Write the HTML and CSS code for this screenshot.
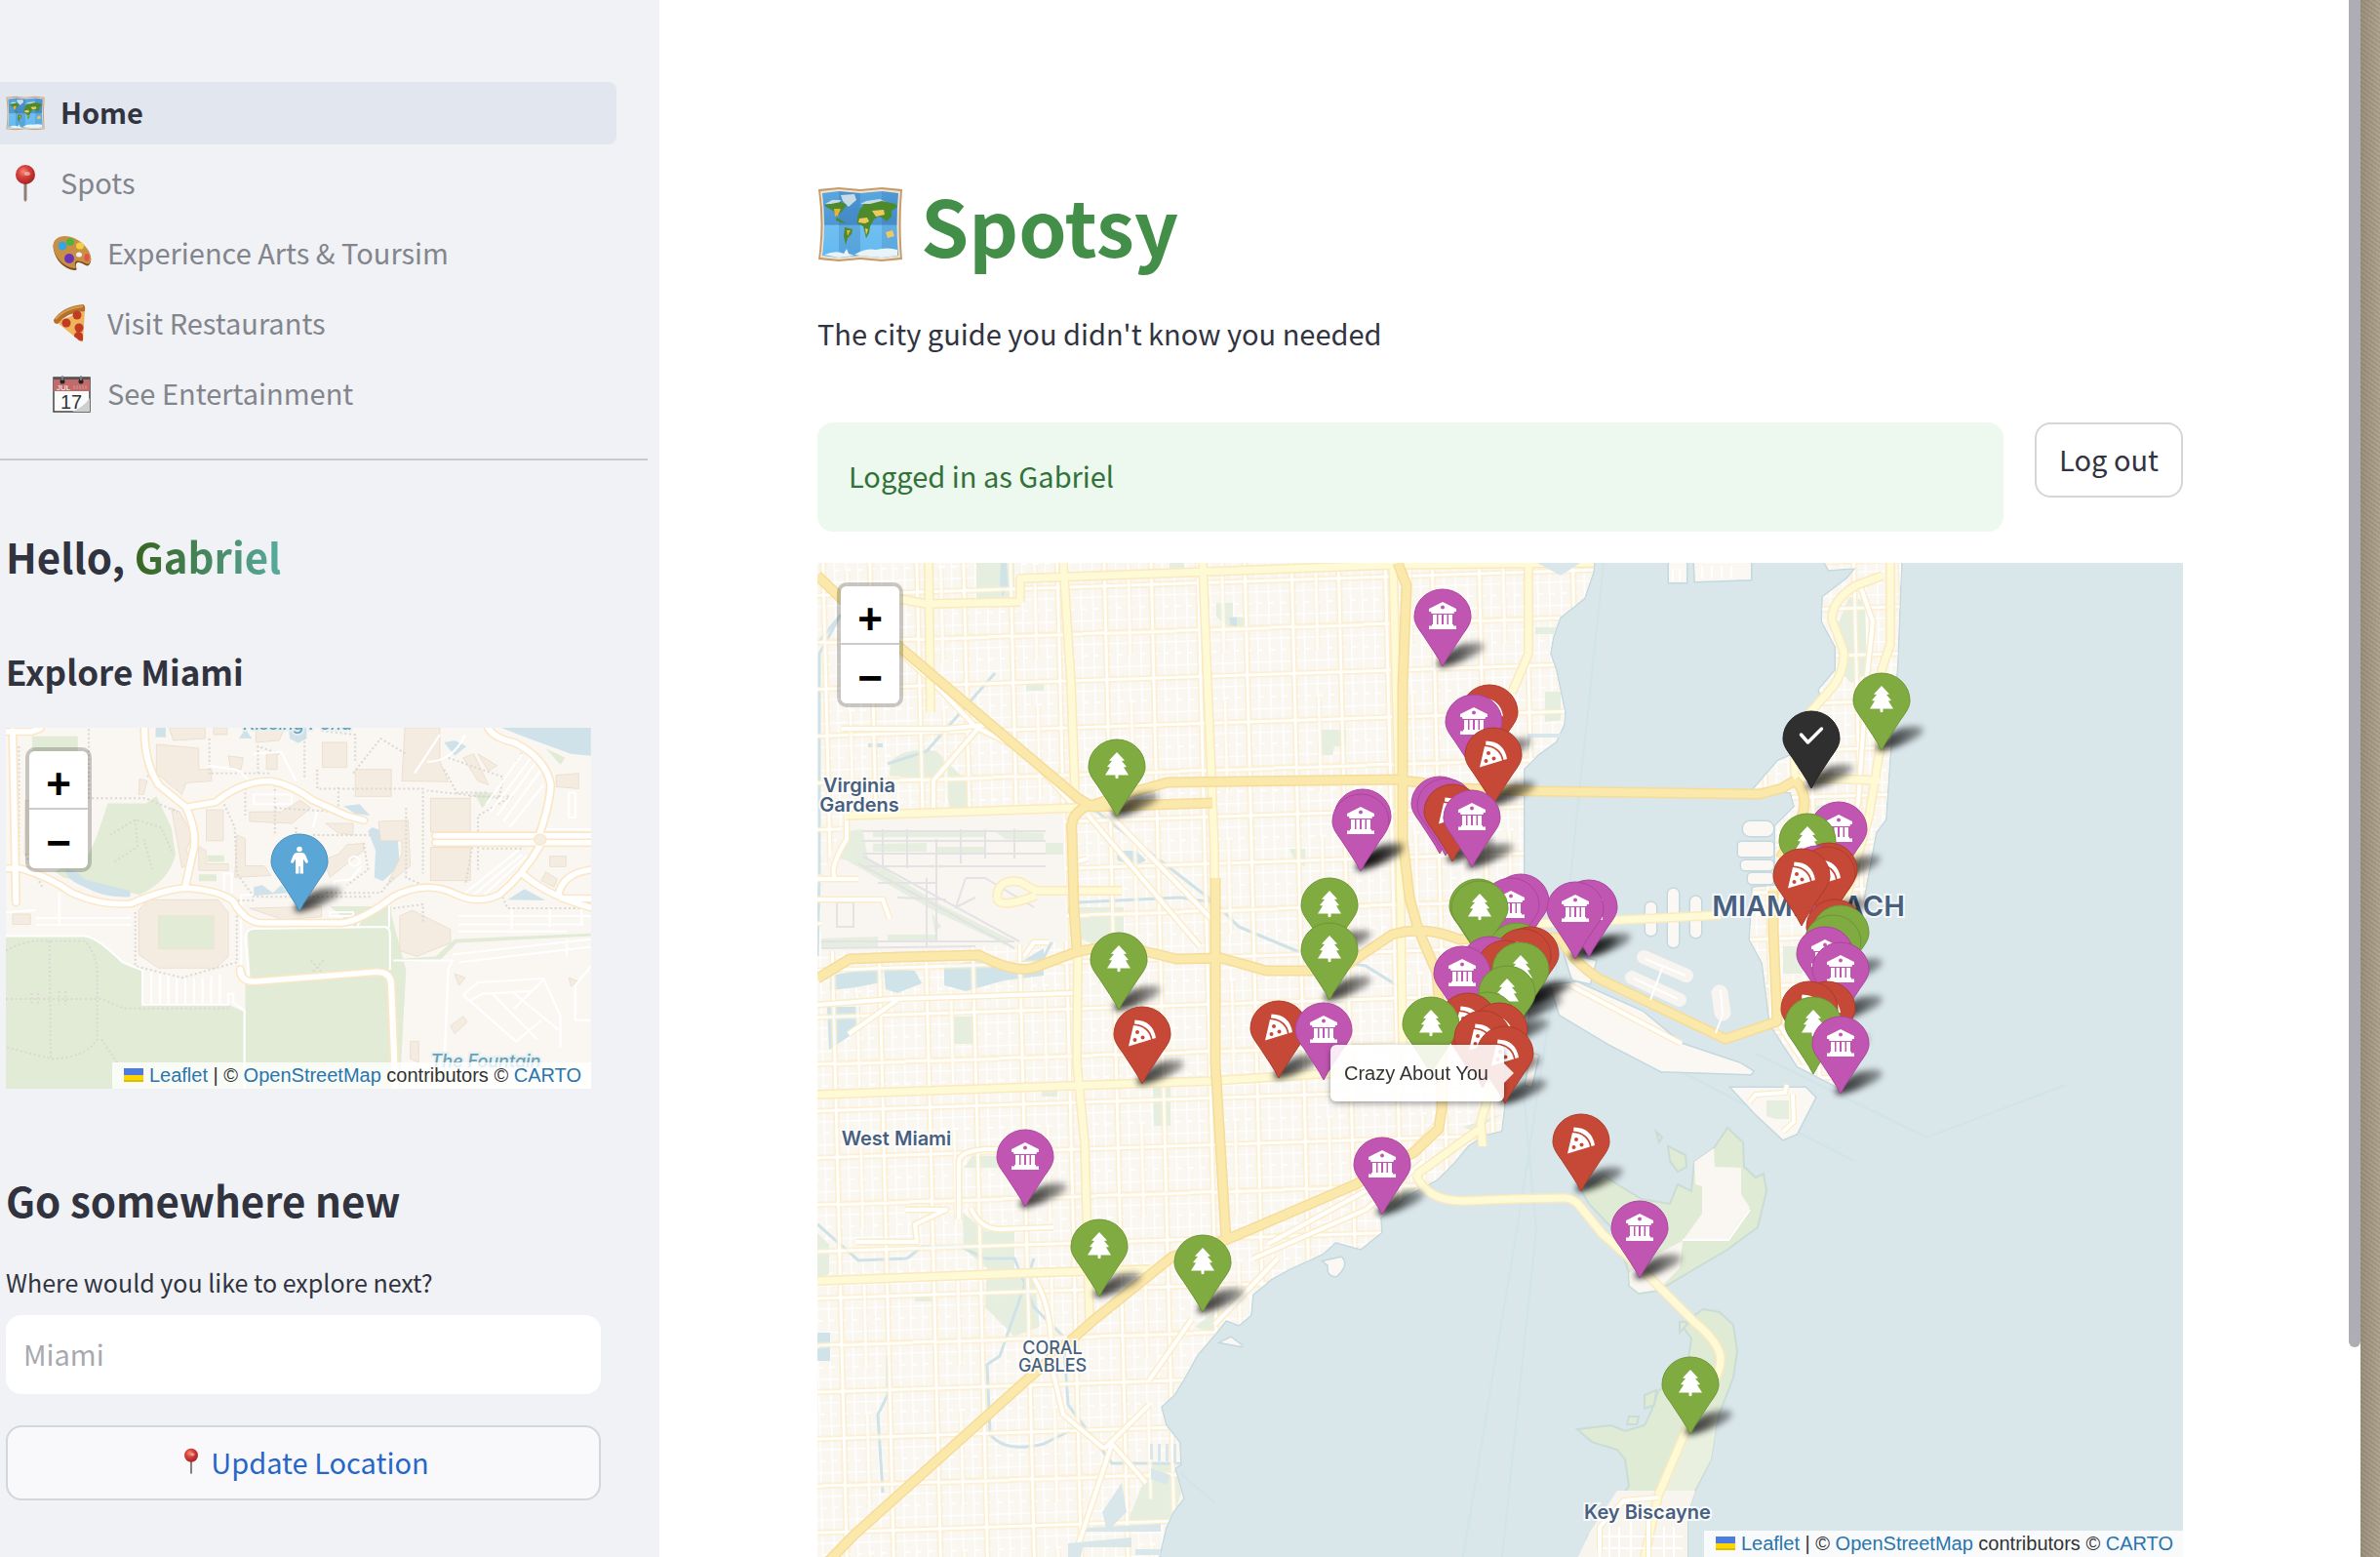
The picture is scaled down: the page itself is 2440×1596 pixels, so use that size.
FILE: index.html
```html
<!DOCTYPE html>
<html lang="en">
<head>
<meta charset="utf-8">
<title>Spotsy</title>
<link rel="stylesheet" href="styles.css">
</head>
<body>
<svg class="defs" aria-hidden="true">
  <defs>
    <linearGradient id="sea" x1="0" y1="0" x2="0" y2="1"><stop offset="0" stop-color="#5aa6df"/><stop offset=".5" stop-color="#4d97d2"/><stop offset=".52" stop-color="#72bff0"/><stop offset="1" stop-color="#63b8f0"/></linearGradient>
    <radialGradient id="ball" cx=".4" cy=".35" r=".7"><stop offset="0" stop-color="#f58a78"/><stop offset=".4" stop-color="#d8433c"/><stop offset="1" stop-color="#9e1f24"/></radialGradient>
    <linearGradient id="fade" x1="0" y1="0" x2="1" y2="0"><stop offset="0" stop-opacity=".8"/><stop offset=".45" stop-opacity=".65"/><stop offset="1" stop-opacity=".3"/></linearGradient>
    <symbol id="e-map" viewBox="0 0 88 76">
      <path d="M1 2 22 0 44 2 66 0 87 2Q84 38 87 74L66 76 44 74 22 76 1 74Q6 38 1 2Z" fill="#c79a6b"/>
      <path d="M3 4 22 2 44 4 66 2 85 4Q82 38 85 72L66 74 44 72 22 74 3 72Q8 38 3 4Z" fill="#efe3cf"/>
      <path d="M5 6 22 4 44 6 66 4 83 6Q80 38 83 70L66 72 44 70 22 72 5 70Q9 38 5 6Z" fill="url(#sea)"/>
      <path d="M22 4 44 6V70L22 72Z" fill="#1f5d9a" opacity=".22"/><path d="M66 4 83 6Q80 38 83 70L66 72Z" fill="#1f5d9a" opacity=".18"/>
      <path d="M7 69Q20 64 27 68L30 63 32 68 38 70 22 72ZM38 69Q50 62 60 64Q72 61 82 64L82 70 66 72 44 70Z" fill="#e9f3f8"/>
      <path d="M24 8 38 7 40 13 32 20 26 14ZM8 17 15 13 24 13 22 17ZM44 17 50 14 64 12 70 15 60 17Z" fill="#c9dbe4"/>
      <path d="M7 18 14 17 24 15 30 18 25 25 20 30 19 34 24 36 29 37 25 34 20 31 16 24 9 20ZM28 41 36 43 35 48 31 52 29 59 27 50Z" fill="#4c8a2c"/>
      <path d="M17 22 24 22 21 29 18 30ZM30 44 34 44 31 50Z" fill="#e3b33c"/>
      <path d="M44 22 48 17 54 17 66 14 80 17 82 20 76 24 76 30 71 35 66 31 62 30 58 33 54 40 53 47 50 52 47 40 41 37 41 30Z" fill="#4c8a2c"/>
      <path d="M43 32 51 31 53 35 49 37 42 36ZM56 24 68 23 69 28 60 30ZM49 42 52 43 50 49ZM70 46 77 44 79 50 72 52Z" fill="#f0c860"/>
    </symbol>
    <symbol id="e-pin" viewBox="0 0 40 40">
      <path d="M18.500 20h3v17l-1.500 2-1.500-2z" fill="#8d7f78"/><circle cx="20" cy="11" r="10" fill="url(#ball)"/><ellipse cx="22" cy="10" rx="3" ry="2" fill="#fff" opacity=".45"/>
    </symbol>
    <symbol id="e-palette" viewBox="0 0 40 40">
      <path d="M1 16C-1 7 5 3 12 3C24 3 37 13 39 24C40 29 37 34 34 32C30 30 25 27 24 31C23 34 27 37 22 37C12 36 3 27 1 16Z" fill="#7a4d1c"/>
      <path d="M1 15C-1 7 5 2 12 2C24 2 37 12 39 23C40 28 37 32 34 30C30 28 24 26 23 29C22 33 26 35 22 35C12 34 3 25 1 15Z" fill="#c98f45"/>
      <ellipse cx="27" cy="21" rx="3" ry="2.500" fill="#f0f2f6"/><circle cx="10" cy="12" r="4.500" fill="#3aa5dd"/><circle cx="18" cy="8" r="4" fill="#4db53c"/><ellipse cx="28" cy="12" rx="4" ry="3.500" fill="#f2cf45"/><circle cx="17" cy="25" r="5" fill="#6b34b8"/><ellipse cx="35" cy="24" rx="2.500" ry="4" fill="#e0524a"/>
    </symbol>
    <symbol id="e-pizza" viewBox="0 0 40 40">
      <path d="M4 18 33 6 31 38Q28 39 26 36Z" fill="#efb35a"/><path d="M1 16Q10 2 31 0Q34 1 33 7Q15 8 5 20Q1 20 1 16Z" fill="#b4702b"/><path d="M3 15Q12 4 31 2" fill="none" stroke="#d99a4c" stroke-width="2"/>
      <g fill="#c33a22"><circle cx="25" cy="11" r="4.500"/><circle cx="14" cy="19" r="4.500"/><circle cx="27" cy="24" r="4.500"/><path d="M22 33a4 4 0 0 1 9-1v5q-4 1-6-2z"/></g>
    </symbol>
    <symbol id="e-cal" viewBox="0 0 40 40">
      <path d="M1 3h37v35H1z" fill="#fbfbfb" stroke="#444" stroke-width="1.500"/><path d="M1 3h37v14H1z" fill="#c26a6a"/><path d="M1 3h37v2H1z" fill="#555"/>
      <circle cx="10" cy="7" r="2.500" fill="#222"/><circle cx="29" cy="7" r="2.500" fill="#222"/><path d="M10 1v5M29 1v5" stroke="#888" stroke-width="1.500"/>
      <path d="M38 24Q32 33 20 38H38Z" fill="#cfcfcf"/><path d="M22 11v4M25 11v4M28 11v4M31 11v4M34 11v4" stroke="#d79a9a"/>
      <text x="4" y="16" class="cal-m">JUL</text><text x="8" y="35" class="cal-d">17</text>
    </symbol>

    <path id="drop" d="M0 0C-5-10-13-21-20-32C-26-40-29-45-29-51A29 28 0 0 1 29-51C29-45 26-40 20-32C13-21 5-10 0 0Z"/>
    <path id="sh" fill="url(#fade)" d="M-6-2Q4-18 22-23Q42-27 43-21Q43-15 28-9Q12-1-2 1Z"/>
    <g id="i-museum" fill="#fff"><path fill-rule="evenodd" d="M0-66 14-59V-56H12Q12-54 11-54H-11Q-12-54-12-56H-14V-59ZM0-62.500a2 2 0 1 0 0 4a2 2 0 0 0 0-4Z"/><path d="M-10-53h4v11h-4zM-4.500-53h3.500v11h-3.500zM1-53h3.500v11H1zM6-53h4v11H6zM-11-43h22v2h-22zM-14-41.500h28v3.500h-28z"/></g>
    <g id="i-tree" fill="#fff"><path d="M0-66 8-57.500 5-57 10-51 7-50.500 12-42.500H1.500V-39.500Q0-38-1.500-39.500V-42.500H-12L-7-50.500-10-51-5-57-8-57.500Z"/></g>
    <g id="i-pizza"><path d="M-7.500-65.500Q11-65 14-47L10.500-46Q8-60-8-61.500Z" fill="#fff"/><path d="M-9-60Q6-59 9-45.500L-14-38.500Z" fill="#fff"/><g fill="#c54936"><circle cx="-5" cy="-53" r="2"/><circle cx="-7.500" cy="-45" r="2"/><circle cx=".5" cy="-47.500" r="2"/></g></g>
    <g id="pm"><use href="#drop" fill="#c156b2" stroke="#a9459c"/><use href="#i-museum"/></g>
    <g id="pg"><use href="#drop" fill="#80ab41" stroke="#6c9535"/><use href="#i-tree"/></g>
    <g id="pr"><use href="#drop" fill="#c54936" stroke="#ac3c2b"/><use href="#i-pizza"/></g>
    <g id="pk"><use href="#drop" fill="#2f2f30" stroke="#222"/><path d="M-10.500-55-3.500-47 10.500-61" fill="none" stroke="#fff" stroke-width="3.500" stroke-linecap="round" stroke-linejoin="round"/></g>
    <g id="pb"><use href="#drop" fill="#5aa6d6" stroke="#468fbe"/><g fill="#fff"><circle cy="-63.500" r="2.800"/><path d="M-3-60H3Q5-60 6.500-57L9-50.500Q8-48.500 6.500-49.500L4-53.500V-38.500H.5V-46H-.5V-38.500H-4V-53.500L-6.500-49.500Q-8-48.500-9-50.500L-6.500-57Q-5-60-3-60Z"/></g></g>
    <filter id="soft" x="-5%" y="-5%" width="110%" height="110%"><feGaussianBlur stdDeviation="3"/></filter>
    <filter id="soft-one" x="-30%" y="-60%" width="160%" height="220%"><feGaussianBlur stdDeviation="3"/></filter>

    <pattern id="minor" width="12" height="24" patternUnits="userSpaceOnUse" patternTransform="matrix(1 -.033 .024 1 0 0)"><rect width="12" height="24" fill="#faf6f0"/><path d="M0 .5H12M0 12.500H6M.5 0V24" stroke="#fff" stroke-width="2" fill="none"/></pattern>
    <pattern id="major" width="48" height="48" patternUnits="userSpaceOnUse" patternTransform="matrix(1 -.033 .024 1 820 587)"><path d="M0 24H48M24 0V48" stroke="#fcedc8" stroke-width="6"/><path d="M0 24H48M24 0V48" stroke="#fff" stroke-width="3"/></pattern>
    <pattern id="half" width="96" height="144" patternUnits="userSpaceOnUse" patternTransform="matrix(1 -.033 .024 1 844 563)"><path d="M24 24V120M0 96H72" stroke="#fcedc8" stroke-width="5" fill="none"/><path d="M24 24V120M0 96H72" stroke="#fff" stroke-width="3" fill="none"/></pattern>

    <path id="land" d="M838 577H1634L1633 587 1624 613 1599 633 1592 653 1589 670 1595 687 1604 730 1603 743 1595 760 1577 773 1562 788V1005L1567 1040 1562 1070 1545 1100 1541 1142 1539 1159 1522 1163 1505 1174 1491 1191 1473 1209 1441 1226 1415 1248 1416 1263 1395 1280 1369 1273 1356 1285 1321 1301 1303 1311 1284 1327 1282 1348 1270 1358 1257 1353 1245 1368 1227 1389 1216 1409 1204 1429 1190 1442 1195 1461 1209 1479 1210 1501 1204 1505 1213 1536 1202 1550 1195 1566 1188 1596V1640H838Z"/>
    <path id="beach" d="M1871 577H1949L1945 680 1937 780 1933 840 1923 853 1913 907 1900 980 1897 1033 1888 1080 1890 1117 1843 1093 1815 1050 1807 987 1794 963 1797 910 1820 908V847L1840 827 1836 812 1797 810 1823 780 1840 773 1850 740 1870 722 1865 707 1882 687V663L1868 637 1869 612 1894 593 1903 582 1875 584Z"/>
    <g id="isles"><path d="M1590 1010 1617 1007 1684 1037 1724 1070 1784 1090 1797 1098 1795 1101 1703 1098 1649 1070 1599 1040Z"/><path d="M1775 1115H1851L1861 1125 1842 1162 1828 1168 1800 1142Z"/><path d="M1711 577h18v20h-18zM1737 577h58v17l-57 2z"/><rect x="1787" y="842" width="31" height="15" rx="7"/><rect x="1782" y="863" width="36" height="15" rx="3"/><rect x="1785" y="882" width="33" height="10" rx="4"/><rect x="1792" y="895" width="26" height="11" rx="4"/><rect x="1687" y="925" width="11" height="34" rx="5"/><rect x="1710" y="911" width="11" height="60" rx="5"/><rect x="1733" y="919" width="11" height="42" rx="5"/><path d="M1604 978 1636 985 1630 1008 1612 1004ZM1570 1080 1577 1082 1570 1114 1564 1112ZM1252 1376 1262 1371 1274 1380ZM1357 1293 1375 1289Q1383 1296 1370 1308Q1360 1308 1362 1297Z"/></g>
    <path id="virginia" d="M1771 1156 1787 1171 1788 1196 1800 1207 1808 1203 1811 1221 1802 1258 1771 1281 1737 1301 1700 1323 1680 1326 1670 1318V1305L1661 1278 1652 1258 1629 1234 1622 1222 1644 1205 1658 1214 1683 1229 1712 1234 1720 1214 1734 1221 1737 1191 1757 1177Z"/>
    <path id="key" d="M1746 1342 1763 1345 1777 1358 1781 1385 1777 1412 1760 1456 1754 1496 1737 1530 1730 1553V1640H1614L1627 1576 1638 1560 1658 1540 1670 1523 1666 1496 1658 1486 1632 1478 1617 1465 1652 1461 1666 1467 1686 1461 1692 1449 1700 1426 1714 1415 1730 1400 1734 1372 1724 1358Z"/>
    <clipPath id="ground"><use href="#land"/><use href="#beach"/></clipPath>

    <g id="hw" fill="none" stroke-linejoin="round"><path d="M838 590 862 613 922 663 1009 737 1105 818 1120 827 1243 823M1115 827 1150 815 1197 802 1431 799 1500 808 1577 811 1804 814 1827 808 1840 800M1433 577 1442 600 1438 703V860L1445 920 1454 953 1473 997 1478 1060V1137L1475 1157 1450 1181 1390 1214 1257 1271 1202 1288 1119 1355 876 1573 840 1610M1115 826Q1096 835 1099 853L1101 930 1104 975M838 1003 871 983 922 981 1004 979Q1040 998 1060 992L1100 977Q1130 968 1165 973L1206 983 1252 982 1298 995 1372 995 1427 958Q1460 948 1496 963L1560 958 1600 962Q1612 985 1639 1003L1769 1065 1822 1047 1818 953V913M1246 900V1090L1257 1271M1840 800Q1856 815 1846 840L1825 880"/></g>
    <g id="pale" fill="none" stroke-linejoin="round"><path d="M1046 617V593L1427 579 1634 577M922 614 950 619 1046 617M1233 577 1245 870V900M1105 975 1104 1090 1112 1171 1117 1355M1090 577 1098 700 1102 810M867 836 1105 828M838 1122 1243 1108 1349 1101 1420 1098M838 1313 1050 1305 1179 1301M952 577 954 730M1022 921Q1022 900 1046 904L1062 913H1150M1022 921Q1026 932 1062 918M1428 577 1434 800 1438 1070M1520 1175 1518 1150 1530 1110M1452 1204 1520 1155M1550 948 1662 943 1764 938M1567 577V670L1550 710M1452 1204Q1462 1231 1500 1231L1550 1229 1604 1228Q1614 1228 1621 1238L1643 1265 1680 1298 1737 1355Q1762 1375 1764 1392 1764 1405 1757 1415L1726 1472 1700 1533 1686 1596M1938 577V660L1929 687 1927 770 1916 837 1890 930 1880 1000M1930 590 1903 600Q1878 615 1878 635L1890 667Q1892 685 1880 703L1856 730 1840 770V800M1840 797 1927 800"/></g>
    <g id="wh" fill="none" stroke-linejoin="round"><path d="M922 668 962 705 1000 745 1050 770 1100 825M1115 835 1230 970M1133 830 1245 945M1115 880 1098 885M863 747H970L1010 743M1004 745 957 800V830M868 836V860Q850 890 856 900M838 901H880M838 922H905L912 942M1050 980 1060 966H1075M838 1030 915 1024 1100 1018M920 1025 870 1060M983 1250V1190Q985 1180 1010 1178H1030M928 1240H970L938 1255 940 1273H878M995 1238Q1005 1260 1025 1260L1080 1258M1300 1275 1420 1210 1475 1150M1285 1290 1400 1240 1460 1190M1100 1600 1140 1480 1175 1520M1132 1485 1178 1440M1178 1415 1222 1352M1245 1358 1310 1290M1060 1310Q1080 1340 1078 1400L1090 1450 1132 1485M1907 600 1920 637 1914 693 1905 823 1880 920M1822 1047 1850 1090M1610 1010 1724 1070"/></g>
    <path id="lanes" fill="none" stroke-linecap="round" d="M14 582H75L95 574M30 580 38 1025M14 937H50Q120 960 170 1000 240 1035 310 1028 400 985 450 988 520 995 550 1020 580 1078 620 1078H810Q860 1070 930 1010 1010 965 1080 1005 1130 1030 1180 1005 1240 950 1278 875M342 574Q340 660 375 720L440 778Q470 850 455 900L438 985M440 778 510 765Q570 710 640 710 690 720 740 760L820 800 860 812M1155 574Q1170 600 1215 610 1290 650 1302 720 1300 770 1275 850M1030 852H1397M1030 870H1397M1240 955Q1300 1010 1397 1038M1320 1005Q1330 950 1397 940M1330 1015H1397M568 1198Q568 1230 600 1230L890 1205Q925 1205 925 1240L935 1510"/>
  </defs>
</svg>

<div class="app">
  <aside class="sidebar">
    <nav class="nav" aria-label="Pages">
      <a class="nav-link active" href="#"><svg class="emoji"><use href="#e-map"/></svg>Home</a>
      <a class="nav-link" href="#"><svg class="emoji"><use href="#e-pin"/></svg>Spots</a>
      <a class="nav-link child" href="#"><svg class="emoji"><use href="#e-palette"/></svg>Experience Arts &amp; Toursim</a>
      <a class="nav-link child" href="#"><svg class="emoji"><use href="#e-pizza"/></svg>Visit Restaurants</a>
      <a class="nav-link child" href="#"><svg class="emoji"><use href="#e-cal"/></svg>See Entertainment</a>
    </nav>
    <div class="side-body">
      <h2 class="hello">Hello, <span class="name">Gabriel</span></h2>
      <h3 class="explore">Explore Miami</h3>
      <div class="map mini">
        <svg class="tiles" viewBox="0 0 600 370" preserveAspectRatio="xMidYMid slice">
          <rect width="600" height="370" fill="#faf7f2"/>
          <g transform="translate(-6.070 -226.200) scale(.4337 .3954)" stroke-linejoin="round">
            <g fill="#e1ebd5"><path d="M14 1112H200Q240 1120 290 1180L335 1200V1290H540L580 1310V1510H14ZM585 1095 920 1088V1035L960 1200 945 1510H580V1240L592 1225ZM255 768H345L370 750 405 830 415 900Q400 970 330 1005L150 960 130 945 210 900 230 850ZM76 594h108v40H76zM780 1035H925V1090H840ZM490 903h40v17h-40zM470 952h42v18h-42zM1290 625 1336 650 1325 668ZM1120 740 1170 740 1140 780ZM930 1172 1030 1165 1075 1120 1397 1105V1112L1080 1130 1040 1175 930 1180Z"/></g>
            <g fill="#d0e2e9"><path d="M1185 572H1397V645L1350 640 1250 600ZM155 940Q175 935 200 965L308 995V1010Q250 1015 200 985 155 965 155 940ZM870 840 880 830 940 855 945 930 905 970 885 960 888 890ZM812 775 850 770 875 800 840 795ZM1200 1018 1240 990 1290 1020ZM600 985 620 980 645 1000 665 980 680 1000 600 1008ZM1050 610 1075 605 1103 620 1075 645ZM565 600 580 575 596 600ZM683 572H725V600L705 612 685 600ZM368 572h24v25h-24z"/></g>
            <g fill="#f5ece1" stroke="#e8dccb" stroke-width="2"><path d="M370 615 470 625V680H500V710L440 715 430 745 370 690ZM590 790H665L710 760 735 780 690 820 590 815ZM405 780 425 790 455 850 440 890 455 920 430 935 420 870ZM488 785H528V865H488ZM470 880 487 890V925H540V942H470ZM1018 755H1112V842H1018ZM1018 882H1112V968H1018ZM840 680H925V750H840ZM957 572H1040V660L1060 712 950 710ZM1095 650 1120 640 1155 720 1130 710ZM1130 640 1175 670 1155 685ZM762 610H820V675H762ZM895 815 965 812 970 930 915 980 950 900V865H900ZM1315 695 1368 690V730L1315 725ZM945 1060 975 1045 1065 1095V1130L985 1165 945 1150ZM560 850 580 860V930H625L640 955 555 960ZM770 820H835V850L800 845ZM860 872V890L780 960 765 915 800 900 820 875ZM400 572H485V600L410 605ZM505 572h32v18h-32zM605 575 670 580 660 605 605 610ZM540 645 575 650 570 680 545 675ZM630 640H655V680H630ZM330 705 348 710 340 745H328ZM60 760H80V900H58ZM30 1055H72V1082H30ZM1300 905H1338V932H1300ZM1290 945 1318 965 1310 985 1280 968ZM1075 1210 1100 1220 1085 1240ZM1065 1345 1095 1320 1105 1335 1075 1365ZM970 1385H990V1440L970 1430ZM590 1040 760 1035V1062L670 1070ZM1345 1220 1368 1230 1350 1242Z"/><path fill-rule="evenodd" d="M350 1018H515L540 1050V1165L510 1195H375L328 1160V1045ZM375 1060V1145H505V1060Z"/></g>
            <path d="M375 1060H505V1145H375Z" fill="#e1ebd5"/>
            <g fill="none" stroke="#dcd9d4" stroke-width="5" stroke-dasharray="5 6"><path d="M45 620V905M210 575V755H345L420 790M320 1050V1190L430 1220 560 1180V1050M14 1150Q60 1120 117 1125H200Q230 1160 230 1210V1380Q200 1430 120 1430L14 1400M117 1125 120 1430M14 1275H240L295 1300H540M75 1260V1290M90 1260V1290M140 1255V1290M155 1255V1290M240 1380 290 1460M260 850 320 810 380 830 410 900M320 810 325 880 270 920M340 860 360 940M495 600V700M610 690V620L660 640M720 700V590M650 720V850M580 800V720M530 770 555 830 560 950 600 1010H700L880 1010M650 780 800 790V720M700 830V950M740 850 880 850M860 870 870 940 820 980M770 1000H900L930 960M500 690H640M835 690 900 600 960 640M750 680V730H1000V950M760 580 840 590V660M1060 650 1190 700 1180 755 1010 735M1110 750H1210L1130 800V940M1220 660Q1240 640 1230 620M1050 680 1080 740H1150M1120 860 1100 980M1140 885H1240M930 1040 1000 1030V1080M1180 990 1200 1040H1397M1310 835H1397M60 900 100 985M735 1175 765 1210M765 1175 735 1210M600 1020H560M960 780V960L1000 980M350 700V640"/></g>
            <g fill="none" stroke="#fff" stroke-width="5"><path d="M14 1112H200Q230 1115 290 1180L335 1200M337 1200V1290H540V1262H552V1285L578 1305V1510M358 1205V1290M378 1210V1290M398 1213V1290M418 1220V1290M438 1222V1290M459 1222V1290M479 1220V1290M499 1215V1290M520 1210V1290M600 1005H570V1205M590 1240 580 1120Q580 1095 600 1093L910 1088Q922 1090 922 1110V1200M920 1030V1090M845 1088 855 1060H780V1050H835V1060M85 1065H310M85 1083H310M140 1000V1083M14 1050 85 1045M1085 1060H1397M1085 1082H1380M1085 1100H1340M1210 1042V1095M1300 1042V1090M1375 1042V1082M930 1175H1070L1060 1195 1050 1450M1070 1160 1397 1120M1085 1180 1397 1140M1340 1120V1165M1095 1265 1130 1232 1285 1222 1325 1320V1400M1095 1265 1220 1385 1280 1330M1110 1280 1140 1262 1255 1255M1165 1262 1270 1380M1215 1260 1320 1355M1285 1225 1215 1300M1397 1190 1360 1240V1330H1397M1150 770 1235 640M1160 790 1255 650M1175 800 1265 665M1190 815 1280 680M1205 830 1285 720M1345 740H1360V805H1345ZM1290 835H1397M1100 1000 1225 890M1120 1005 1235 900M1140 1010 1245 905M1160 1015 1250 915M600 770H690V745H600ZM600 640 665 635 700 710M530 1000V950H548V1000M490 670 560 680 600 720M790 1000V970L830 965 855 930M740 830 750 790M1010 660Q1070 660 1100 590M980 690 1040 590"/><circle cx="838" cy="918" r="12"/></g>
            <use href="#lanes" stroke="#fbe7c6" stroke-width="22"/>
            <use href="#lanes" stroke="#fff" stroke-width="14"/>
            <circle cx="1277" cy="862" r="14" fill="#f5eee4" stroke="#fae9cd" stroke-width="4"/>
          </g>
          <text class="lbl water" x="299" y="2">Kissing Pond</text>
          <text class="lbl water" x="492" y="348">The Fountain</text>
          <use href="#sh" x="301" y="188" filter="url(#soft-one)"/>
          <use href="#pb" x="301" y="188"/>
        </svg>
        <div class="zoom"><button type="button" aria-label="Zoom in">+</button><button type="button" aria-label="Zoom out">−</button></div>
        <div class="attribution"><svg class="flag" viewBox="0 0 20 14"><path fill="#4c7be1" d="M0 0h20v7H0z"/><path fill="#ffd500" d="M0 7h20v5H0z"/><path fill="#e0bc00" d="M0 12h20v2H0z"/></svg> <a href="#">Leaflet</a> | © <a href="#">OpenStreetMap</a> contributors © <a href="#">CARTO</a></div>
      </div>
      <h2 class="go">Go somewhere new</h2>
      <form class="form">
        <label for="place">Where would you like to explore next?</label>
        <input id="place" type="text" placeholder="Miami">
        <button class="btn wide" type="button"><svg class="emoji-sm"><use href="#e-pin"/></svg>Update Location</button>
      </form>
    </div>
  </aside>

  <main class="main">
    <h1 class="title"><svg class="emoji-lg"><use href="#e-map"/></svg>Spotsy</h1>
    <p class="tagline">The city guide you didn't know you needed</p>
    <div class="status">
      <div class="alert" role="status">Logged in as Gabriel</div>
      <button class="btn" type="button">Log out</button>
    </div>
    <div class="map city">
      <svg class="tiles" viewBox="838 577 1400 1019" preserveAspectRatio="xMinYMin slice">
        <rect x="838" y="577" width="1400" height="1019" fill="#d9e6ea"/>
        <g fill="none" stroke="#d0e4e9" stroke-width="2"><path d="M1644 577 1610 900 1560 1230 1500 1596M1560 1100 1575 1260 1540 1596M1650 1060 1900 1190M1800 1080 1975 1166 2118 1112M1210 1510 1245 1540"/></g>
        <g fill="#fbf8f4" stroke="#c3d9df" stroke-width="3"><use href="#land"/><use href="#beach"/><use href="#isles"/></g>
        <g fill="#fbf8f4"><use href="#land"/><use href="#beach"/><use href="#isles"/></g>
        <g fill="#dfebd4" stroke="#c9dcd6" stroke-width="2"><use href="#virginia"/><use href="#key"/><path d="M1710 1175 1728 1184 1729 1196 1720 1201 1712 1190ZM1698 1160 1704 1166 1701 1171ZM1686 1430 1698 1425 1696 1440 1686 1444ZM1670 1452 1680 1452 1678 1460 1668 1460ZM1722 1355 1732 1355 1722 1366Z"/></g>
        <path d="M1737 1191 1757 1177 1758 1196 1785 1197V1224L1794 1238 1771 1270 1725 1272 1745 1244V1216L1738 1214ZM1670 1305 1690 1290 1725 1272 1722 1300 1700 1322 1680 1325 1671 1318Z" fill="#faf7f2"/>
        <path d="M1658 1528H1738L1730 1553V1600H1616L1630 1570Z" fill="#f8f4ee"/>
        <path d="M1738 1440 1762 1445 1754 1496 1737 1528H1705Z" fill="#e9f0e0"/>
        <g clip-path="url(#ground)">
          <rect x="838" y="577" width="730" height="1019" fill="url(#minor)"/><rect x="1568" y="577" width="390" height="560" fill="url(#minor)"/>
          <g fill="#e6efdf"><path d="M1001 577H1040V600L1037 617 1008 621 1001 618ZM1247 618H1264V632L1278 633V641L1262 645 1247 632ZM1052 699H1070V708H1052ZM1354 748H1380V765H1368L1366 774H1354ZM913 780Q930 765 960 770L980 790 996 805 992 830 975 832 967 800 912 795ZM1106 930H1152V965L1130 972 1108 962ZM978 1042H998V1070H978ZM1182 1114H1200V1154H1183ZM1068 1117H1084V1124H1068ZM997 1185H1030V1197H988ZM987 1243 1010 1262 1040 1262V1300L1060 1310 1066 1360 1040 1370 1010 1340 1012 1300 988 1280ZM838 1264 850 1275V1306L838 1312ZM938 1328H960V1334H938ZM1199 577H1214V590H1199ZM1322 870H1338V888L1328 884ZM1412 1240 1430 1222 1460 1210 1440 1230 1424 1248 1420 1262ZM1180 1500 1204 1500 1212 1525 1202 1562H1155ZM1540 1142 1500 1155 1510 1160ZM1896 612 1912 616 1914 690 1898 700 1888 690 1892 670 1884 640ZM1584 709H1600V738L1584 740ZM1574 643H1595V650H1574ZM1828 970H1848V998H1828ZM1855 827 1890 822 1890 835 1860 840ZM1303 1311 1325 1300 1310 1318ZM1225 1360 1245 1345 1245 1368Z"/></g>
          <g fill="#d0e3e9"><path d="M851 1000 880 995 905 993 903 1007 878 1012 851 1015ZM906 992 938 995 945 1008 920 1018 908 1014ZM968 990 1000 985 1040 990 1070 972V1000L1030 1005 990 1016 968 1010ZM848 1032H882L880 1056 850 1076ZM1144 872 1165 872 1175 882 1162 888 1146 882ZM1026 577 1032 577 1034 600 1028 612 1025 600ZM838 1366H851V1395H838ZM1260 633H1268V642H1262ZM890 762H905V766H890Z"/></g>
          <g fill="none" stroke="#cfe2e8" stroke-width="3"><path d="M838 660 862 630 840 670 840 900 838 980M910 783 950 770 985 730 1020 690M1122 830 1245 925 1270 950 1330 975 1370 985M1105 925 1210 920 1245 925M1060 1000 1100 925M1370 985 1400 990 1440 1015M930 1290 945 1278H985L1010 1290 1040 1290 1060 1340 1090 1370 1095 1440 1140 1500 1210 1500M1010 1400 1025 1390 1060 1290M1012 1400 1015 1470Q1030 1490 1070 1480L1100 1465M910 1390V1430L900 1450 905 1530M838 1255 880 1292 930 1290"/></g>
          <rect x="838" y="577" width="1120" height="1019" fill="url(#major)" opacity=".85"/>
          <rect x="838" y="577" width="730" height="1019" fill="url(#half)" opacity=".75"/>
          <path d="M866 842 1090 830 1094 965 930 975 842 975 842 900Z" fill="#f9f6f2"/>
          <g fill="#e6efdf"><path d="M868 852 884 850 890 880 960 925 1040 965 1030 968 960 935 868 882 860 880ZM895 851H1010V858H895ZM895 865 950 864V873H895ZM1020 852 1070 854V862L1030 860ZM1072 864H1090V876H1072ZM960 868H1010V874H960ZM842 962 900 960V972H842ZM910 958H960V964H910ZM955 935 965 950 958 955Z"/></g>
          <g fill="none" stroke="#e3e2e4" stroke-width="2"><path d="M884 852H1072M884 862H1072M884 875H1072M888 888H1072M880 885 1040 972M885 878 1045 965M842 965H1040M842 972 1000 970M960 860V965M950 900V972M905 850V888M930 850V890M985 850V885M1010 850V880M1040 850V880M990 900H1010L1060 930M1000 920 980 930 990 900M858 925H875V950H858ZM900 905 960 905M920 920 970 922"/></g>
        </g>
        <use href="#wh" stroke="#fcedc8" stroke-width="7"/><use href="#wh" stroke="#fff" stroke-width="4"/><use href="#pale" stroke="#fbe9bf" stroke-width="10"/><use href="#pale" stroke="#fefad6" stroke-width="7"/><use href="#hw" stroke="#f6dc99" stroke-width="11"/><use href="#hw" stroke="#fbe8ab" stroke-width="8"/>
        <g fill="none" stroke="#f8f4ef" stroke-linecap="round"><path d="M1685 981 1729 1000M1673 1002 1722 1025" stroke-width="14"/><path d="M1763 1018 1766 1038" stroke-width="17"/></g>
        <g fill="none" stroke="#fff" stroke-width="2"><path d="M1705 990 1692 1025M1687 983 1728 1000M1675 1003 1720 1024M1764 1015 1766 1040 1759 1059M1725 1271H1772L1794 1240M1640 1565V1596M1650 1565V1596M1660 1565V1596M1672 1560V1596M1706 1565V1596M1716 1565V1596M1640 1575H1725M1640 1587H1725M1715 583V595M1722 583V595M1745 580V593M1755 580V593M1765 580V593M1775 580V593"/></g>
        <g fill="none"><path d="M1793 1130 1800 1122 1830 1120 1832 1112M1838 1122 1839 1150 1828 1160M1690 1596V1545M1640 1590V1565L1665 1538 1700 1535" stroke="#fbe9bf" stroke-width="6"/><path d="M1793 1130 1800 1122 1830 1120 1832 1112M1838 1122 1839 1150 1828 1160M1690 1596V1545M1640 1590V1565L1665 1538 1700 1535" stroke="#fff" stroke-width="4"/><path d="M1811 1128H1834V1147H1820L1811 1144Z" fill="#e6efdf"/></g>
        <g fill="#d9e6ea"><path d="M1095 1582 1160 1576V1586H1110L1108 1596H1095ZM1115 1566 1190 1562V1570H1112ZM1180 1505 1200 1512 1196 1522 1180 1516ZM1150 1520 1155 1550 1135 1570 1130 1550ZM1179 1480h3v16h-3zM1187 1480h3v18h-3zM1195 1480h3v18h-3zM1203 1480h3v20h-3zM1164 1588H1190V1594H1164ZM1576 577H1620L1600 590ZM1566 752H1600V756H1570L1566 770Z"/></g>

        <text class="lbl bold" x="881" y="812">Virginia</text><text class="lbl bold" x="881" y="832">Gardens</text>
        <text class="lbl bold" x="919" y="1174">West Miami</text>
        <text class="lbl" x="1079" y="1388">CORAL</text><text class="lbl" x="1079" y="1406">GABLES</text>
        <text class="lbl bold" x="1689" y="1557">Key Biscayne</text>
        <text class="lbl big" x="1854" y="939">MIAMI BEACH</text>

        <g filter="url(#soft)">
          <use href="#sh" x="1479" y="683"/><use href="#sh" x="1929" y="769"/><use href="#sh" x="1527" y="781"/><use href="#sh" x="1857" y="808"/><use href="#sh" x="1531" y="825"/><use href="#sh" x="1145" y="837"/><use href="#sh" x="1395" y="892"/><use href="#sh" x="1397" y="888"/><use href="#sh" x="1489" y="883"/><use href="#sh" x="1509" y="889"/><use href="#sh" x="1885" y="901"/><use href="#sh" x="1873" y="945"/><use href="#sh" x="1363" y="978"/><use href="#sh" x="1615" y="983"/><use href="#sh" x="1629" y="981"/><use href="#sh" x="1887" y="1007"/><use href="#sh" x="1363" y="1025"/><use href="#sh" x="1569" y="1029"/><use href="#sh" x="1561" y="1031"/><use href="#sh" x="1559" y="1045"/><use href="#sh" x="1545" y="1069"/><use href="#sh" x="1147" y="1035"/><use href="#sh" x="1887" y="1045"/><use href="#sh" x="1873" y="1085"/><use href="#sh" x="1537" y="1107"/><use href="#sh" x="1311" y="1105"/><use href="#sh" x="1171" y="1111"/><use href="#sh" x="1887" y="1121"/><use href="#sh" x="1543" y="1131"/><use href="#sh" x="1621" y="1221"/><use href="#sh" x="1051" y="1237"/><use href="#sh" x="1417" y="1245"/><use href="#sh" x="1681" y="1310"/><use href="#sh" x="1127" y="1329"/><use href="#sh" x="1233" y="1345"/><use href="#sh" x="1733" y="1470"/>
        </g>
        <use href="#pm" x="1479" y="683"/><use href="#pg" x="1929" y="769"/><use href="#pr" x="1527" y="781"/><use href="#pm" x="1511" y="791"/><use href="#pk" x="1857" y="808"/><use href="#pr" x="1531" y="825"/><use href="#pg" x="1145" y="837"/>
        <use href="#pm" x="1476" y="875"/><use href="#pm" x="1482" y="877"/><use href="#pr" x="1489" y="883"/><use href="#pm" x="1397" y="888"/><use href="#pm" x="1509" y="889"/><use href="#pm" x="1395" y="893"/>
        <use href="#pm" x="1885" y="901"/><use href="#pg" x="1853" y="913"/><use href="#pr" x="1875" y="943"/><use href="#pm" x="1863" y="946"/><use href="#pr" x="1873" y="947"/><use href="#pr" x="1847" y="949"/>
        <use href="#pm" x="1559" y="975"/><use href="#pm" x="1549" y="979"/><use href="#pg" x="1363" y="979"/><use href="#pg" x="1515" y="980"/><use href="#pm" x="1629" y="981"/><use href="#pg" x="1517" y="982"/><use href="#pm" x="1615" y="983"/>
        <use href="#pr" x="1881" y="1001"/><use href="#pg" x="1887" y="1007"/><use href="#pg" x="1879" y="1017"/><use href="#pg" x="1363" y="1025"/><use href="#pg" x="1555" y="1025"/><use href="#pr" x="1569" y="1029"/><use href="#pm" x="1871" y="1029"/><use href="#pr" x="1561" y="1031"/><use href="#pg" x="1147" y="1035"/><use href="#pm" x="1527" y="1039"/><use href="#pr" x="1543" y="1043"/><use href="#pg" x="1559" y="1045"/><use href="#pm" x="1887" y="1045"/><use href="#pm" x="1499" y="1049"/><use href="#pg" x="1545" y="1069"/>
        <use href="#pr" x="1873" y="1085"/><use href="#pr" x="1855" y="1085"/><use href="#pg" x="1525" y="1096"/><use href="#pr" x="1505" y="1097"/><use href="#pg" x="1467" y="1101"/><use href="#pg" x="1859" y="1101"/><use href="#pr" x="1311" y="1105"/><use href="#pm" x="1357" y="1107"/><use href="#pr" x="1537" y="1107"/><use href="#pr" x="1171" y="1111"/><use href="#pr" x="1520" y="1115"/><use href="#pm" x="1887" y="1121"/><use href="#pr" x="1543" y="1131"/>
        <use href="#pr" x="1621" y="1221"/><use href="#pm" x="1051" y="1237"/><use href="#pm" x="1417" y="1245"/><use href="#pm" x="1681" y="1310"/><use href="#pg" x="1127" y="1329"/><use href="#pg" x="1233" y="1345"/><use href="#pg" x="1733" y="1470"/>
      </svg>
      <div class="zoom"><button type="button" aria-label="Zoom in">+</button><button type="button" aria-label="Zoom out">−</button></div>
      <div class="tip" role="tooltip">Crazy About You</div>
      <div class="attribution"><svg class="flag" viewBox="0 0 20 14"><path fill="#4c7be1" d="M0 0h20v7H0z"/><path fill="#ffd500" d="M0 7h20v5H0z"/><path fill="#e0bc00" d="M0 12h20v2H0z"/></svg> <a href="#">Leaflet</a> | © <a href="#">OpenStreetMap</a> contributors © <a href="#">CARTO</a></div>
    </div>
  </main>
  <div class="scrollbar"><div class="thumb"></div></div>
  <div class="desktop"></div>
</div>
</body>
</html>
```
FILE: styles.css
```css
* { box-sizing: border-box; }
body {
  margin: 0;
  font-family: "Noto Sans CJK SC", "Noto Sans", sans-serif;
  font-size: 29px;
  line-height: 48px;
  color: #31333f;
  background: #fff;
}
h1, h2, h3, p { margin: 0; }
a { text-decoration: none; }
.defs { position: absolute; width: 0; height: 0; }

.app { display: flex; min-height: 100vh; }

/* Sidebar */
.sidebar { flex: 0 0 676px; background: #f0f2f6; padding-top: 84px; }
.nav {
  display: flex;
  flex-direction: column;
  gap: 8px;
  margin-right: 12px;
  padding-bottom: 34px;
  border-bottom: 2px solid #c9cad0;
}
.nav-link {
  display: flex;
  align-items: center;
  gap: 16px;
  height: 64px;
  margin-right: 32px;
  padding: 0 0 4px 6px;
  border-radius: 0 8px 8px 0;
  color: #83858d;
}
.nav-link.child { padding-left: 54px; }
.nav-link.active { background: #e1e6ef; color: #31333f; font-weight: 600; }
.emoji { width: 40px; height: 40px; margin-top: 4px; }
.emoji-sm { width: 28px; height: 34px; }
.emoji-lg { width: 88px; height: 76px; }
.cal-m { font: 8px "Liberation Sans", sans-serif; fill: #fff; }
.cal-d { font: 20px "Liberation Sans", sans-serif; fill: #333; }

.side-body { padding: 0 60px 0 6px; }
.hello, .go { font-size: 42px; line-height: 56px; font-weight: 600; }
.hello { padding-top: 70px; }
.name {
  background: linear-gradient(90deg, #38641f, #57ab9f);
  -webkit-background-clip: text;
  background-clip: text;
  color: transparent;
}
.explore { padding-top: 66px; font-size: 35px; line-height: 48px; font-weight: 600; }
.go { padding-top: 86px; }
.form { display: flex; flex-direction: column; padding-top: 36px; }
.form label { font-size: 25px; line-height: 40px; }
.form input {
  height: 81px;
  margin: 14px 0 32px;
  padding: 0 18px 4px;
  border: 0;
  border-radius: 16px;
  background: #fff;
  font: inherit;
  color: #31333f;
}
.form input::placeholder { color: #a8a9af; opacity: 1; }

.btn {
  display: flex;
  align-items: center;
  justify-content: center;
  gap: 6px;
  height: 77px;
  padding: 0 23px 4px;
  border: 2px solid #d5d6d9;
  border-radius: 16px;
  background: #fff;
  font: inherit;
  color: #31333f;
  white-space: nowrap;
}
.btn.wide { background: #f9f9fb; color: #2766c8; }

/* Main column */
.main {
  flex: 1;
  min-width: 0;
  display: flex;
  flex-direction: column;
  padding: 182px 170px 0 162px;
}
.title {
  display: flex;
  align-items: center;
  gap: 18px;
  font-size: 79px;
  line-height: 96px;
  font-weight: 700;
  color: #438e48;
}
.tagline { margin-top: 39px; }
.status { display: flex; align-items: flex-start; gap: 32px; margin: 68px 0 32px; }
.alert {
  flex: 1;
  padding: 30px 32px 34px;
  border-radius: 16px;
  background: #edf8ef;
  color: #317238;
}

/* Maps */
.map { position: relative; overflow: hidden; background: #d9e6ea; font-family: "Liberation Sans", sans-serif; }
.city { flex: 1; min-height: 800px; }
.mini { height: 370px; margin: 34px 10px 0 0; }
.tiles { position: absolute; inset: 0; width: 100%; height: 100%; }
.lbl {
  font: 500 18px Inter, sans-serif;
  fill: #476080;
  stroke: #fff;
  stroke-opacity: .8;
  stroke-width: 4px;
  paint-order: stroke;
  text-anchor: middle;
}
.lbl.bold { font-weight: 600; font-size: 20px; }
.lbl.big { font-weight: 600; font-size: 29px; }
.lbl.water { font-style: italic; font-size: 18px; fill: #6c9fb4; stroke: #e4f0f4; }
.zoom {
  position: absolute;
  top: 20px;
  left: 20px;
  display: flex;
  flex-direction: column;
  width: 68px;
  border: 4px solid rgba(0, 0, 0, .2);
  border-radius: 10px;
  background-clip: padding-box;
}
.zoom button {
  height: 60px;
  padding: 8px 0 0;
  border: 0;
  background: #fff;
  color: #000;
  font: bold 44px/52px "Liberation Sans", sans-serif;
}
.zoom button:first-child { border-bottom: 2px solid #ccc; border-radius: 6px 6px 0 0; }
.zoom button:last-child { border-radius: 0 0 6px 6px; }
.attribution {
  position: absolute;
  right: 0;
  bottom: 0;
  padding: 0 10px 0 12px;
  background: rgba(255, 255, 255, .8);
  font-size: 20px;
  line-height: 27px;
  color: #333;
  white-space: nowrap;
}
.attribution a { color: #2a75ad; }
.flag { width: 20px; height: 14px; }
.tip {
  position: absolute;
  left: 526px;
  top: 494px;
  padding: 12px 16px 12px 14px;
  border-radius: 6px;
  background: rgba(255, 255, 255, .88);
  box-shadow: 0 2px 6px rgba(0, 0, 0, .4);
  font-size: 20px;
  line-height: 34px;
  color: #333;
  white-space: nowrap;
}
.tip::after {
  content: "";
  position: absolute;
  left: 100%;
  top: 19px;
  border: 10px solid transparent;
  border-left-color: rgba(255, 255, 255, .88);
  border-right: 0;
}

/* Window edge */
.scrollbar { flex: 0 0 12px; background: #fff; }
.thumb { height: 1381px; border-radius: 0 0 6px 6px; background: #adadb3; }
.desktop {
  flex: 0 0 20px;
  background: linear-gradient(90deg, rgba(80, 70, 50, .22), rgba(80, 70, 50, 0)), repeating-linear-gradient(35deg, #b0a692 0 2px, #a39984 2px 4px);
}
```
